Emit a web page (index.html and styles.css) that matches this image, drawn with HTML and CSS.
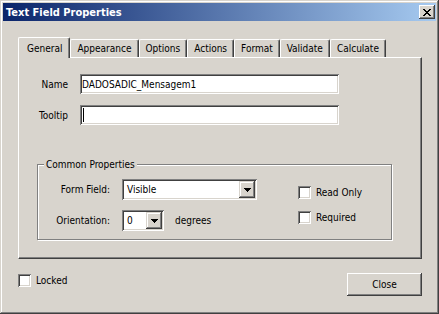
FILE: index.html
```html
<!DOCTYPE html>
<html>
<head>
<meta charset="utf-8">
<title>Text Field Properties</title>
<link rel="stylesheet" href="styles.css">
</head>
<body>
<div class="window">
  <div class="titlebar">
    <span class="title">Text Field Properties</span>
    <span class="close-btn"><svg width="8" height="7" viewBox="0 0 8 7" shape-rendering="crispEdges"><path d="M0 0h2v1H0zM6 0h2v1H6zM1 1h2v1H1zM5 1h2v1H5zM2 2h4v1H2zM3 3h2v1H3zM2 4h4v1H2zM1 5h2v1H1zM5 5h2v1H5zM0 6h2v1H0zM6 6h2v1H6z" fill="#000"/></svg></span>
  </div>
  <div class="body">
    <div class="tabs">
      <div class="tab active">General</div>
      <div class="tab">Appearance</div>
      <div class="tab">Options</div>
      <div class="tab">Actions</div>
      <div class="tab">Format</div>
      <div class="tab">Validate</div>
      <div class="tab">Calculate</div>
    </div>
    <div class="panel">
      <div class="field">
        <span class="field-label">Name</span>
        <div class="input">DADOSADIC_Mensagem1</div>
      </div>
      <div class="field">
        <span class="field-label">Tooltip</span>
        <div class="input"><span class="caret"></span></div>
      </div>
      <div class="group">
        <div class="group-title">Common Properties</div>
        <div class="group-body">
          <div class="g-left">
            <div class="g-row">
              <span class="g-label">Form Field:</span>
              <div class="g-ctl">
                <div class="select wide"><span class="sel-text">Visible</span><span class="drop"><svg width="7" height="4" viewBox="0 0 7 4" shape-rendering="crispEdges"><path d="M0 0h7v1H0zM1 1h5v1H1zM2 2h3v1H2zM3 3h1v1H3z" fill="#000"/></svg></span></div>
              </div>
            </div>
            <div class="g-row">
              <span class="g-label">Orientation:</span>
              <div class="g-ctl">
                <div class="select narrow"><span class="sel-text">0</span><span class="drop"><svg width="7" height="4" viewBox="0 0 7 4" shape-rendering="crispEdges"><path d="M0 0h7v1H0zM1 1h5v1H1zM2 2h3v1H2zM3 3h1v1H3z" fill="#000"/></svg></span></div>
                <span class="degrees">degrees</span>
              </div>
            </div>
          </div>
          <div class="g-right">
            <div class="check"><span class="box"></span><span>Read Only</span></div>
            <div class="check"><span class="box"></span><span>Required</span></div>
          </div>
        </div>
      </div>
    </div>
    <div class="footer">
      <div class="check locked"><span class="box"></span><span>Locked</span></div>
      <button class="btn" type="button">Close</button>
    </div>
  </div>
</div>
</body>
</html>
```
FILE: styles.css
```css
* { box-sizing: border-box; }
html, body { margin: 0; padding: 0; }
body {
  width: 439px;
  height: 314px;
  overflow: hidden;
  font-family: "DejaVu Sans Condensed", "Liberation Sans", sans-serif;
  font-size: 10px;
  color: #000;
  background: #d8d4cd;
}
.window {
  width: 439px;
  height: 314px;
  padding: 3px;
  background: #d8d4cd;
  box-shadow: inset -1px -1px #404040, inset 1px 1px #d8d4cd, inset -2px -2px #808080, inset 2px 2px #fff;
  display: flex;
  flex-direction: column;
}
.titlebar {
  height: 18px;
  flex: none;
  display: flex;
  align-items: center;
  justify-content: space-between;
  background: linear-gradient(to right, #0a246a, #a6caf0);
  padding: 0 1px 0 3px;
}
.title {
  color: #fff;
  font-weight: bold;
  font-size: 11px;
}
.close-btn {
  width: 16px;
  height: 14px;
  background: #d8d4cd;
  box-shadow: inset -1px -1px #404040, inset 1px 1px #fff, inset -2px -2px #808080, inset 2px 2px #d8d4cd;
  display: flex;
  align-items: center;
  justify-content: center;
}
.close-btn svg { display: block; }
.body {
  padding: 0 14px 0 15px;
}
.tabs {
  display: flex;
  align-items: flex-end;
  height: 20px;
  margin-top: 16px;
}
.tab {
  height: 18px;
  padding: 0 6px;
  display: flex;
  align-items: center;
  justify-content: center;
  border-top: 1px solid #fff;
  border-left: 1px solid #fff;
  border-right: 1px solid #404040;
  box-shadow: inset -1px 0 #808080;
  border-radius: 2px 2px 0 0;
  background: #d8d4cd;
  white-space: nowrap;
}
.tab.active {
  height: 21px;
  margin-bottom: -1px;
  padding: 0 7px 0 8px;
  position: relative;
  z-index: 1;
}
.panel {
  height: 202px;
  border: 1px solid;
  border-color: #fff #404040 #404040 #fff;
  box-shadow: inset -1px -1px #808080;
  padding-top: 16px;
}
.field {
  display: flex;
  align-items: center;
  gap: 12px;
  height: 20px;
}
.field + .field { margin-top: 11px; }
.field-label {
  width: 49px;
  text-align: right;
}
.input {
  width: 259px;
  height: 20px;
  background: #fff;
  box-shadow: inset 1px 1px #808080, inset -1px -1px #fff, inset 2px 2px #404040, inset -2px -2px #d8d4cd;
  padding-left: 2px;
  display: flex;
  align-items: center;
}
.caret {
  display: block;
  width: 1px;
  height: 14px;
  background: #000;
  margin-left: 1px;
}
.group {
  margin: 39px 0 0 18px;
  width: 355px;
  height: 76px;
  border: 1px solid #808080;
  box-shadow: inset 1px 1px #fff, 1px 1px #fff;
}
.group-title {
  width: fit-content;
  margin: -7px 0 0 6px;
  padding: 0 2px;
  background: #d8d4cd;
  line-height: 13px;
}
.group-body {
  display: flex;
  margin-top: 8px;
}
.g-left { width: 260px; }
.g-row {
  display: flex;
  align-items: center;
  height: 21px;
}
.g-row + .g-row { margin-top: 10px; }
.g-label {
  width: 72px;
  text-align: right;
  margin-right: 12px;
}
.g-ctl {
  width: 176px;
  display: flex;
  align-items: center;
}
.select {
  height: 21px;
  background: #fff;
  box-shadow: inset 1px 1px #808080, inset -1px -1px #fff, inset 2px 2px #404040, inset -2px -2px #d8d4cd;
  display: flex;
  align-items: center;
  justify-content: space-between;
  padding: 2px;
}
.select.wide { width: 135px; }
.select.narrow { width: 42px; }
.sel-text { padding-left: 3px; }
.drop {
  width: 16px;
  height: 17px;
  background: #d8d4cd;
  box-shadow: inset -1px -1px #404040, inset 1px 1px #d8d4cd, inset -2px -2px #808080, inset 2px 2px #fff;
  display: flex;
  align-items: center;
  justify-content: center;
}
.drop svg { display: block; }
.degrees { margin-left: 11px; }
.g-right {
  display: flex;
  flex-direction: column;
  padding-top: 7px;
}
.check {
  display: flex;
  align-items: center;
  gap: 5px;
}
.g-right .check + .check { margin-top: 12px; }
.box {
  display: block;
  width: 13px;
  height: 13px;
  background: #fff;
  box-shadow: inset 1px 1px #808080, inset -1px -1px #fff, inset 2px 2px #404040, inset -2px -2px #d8d4cd;
}
.footer {
  display: flex;
  justify-content: space-between;
  align-items: flex-start;
  margin-top: 14px;
}
.locked { margin-top: 1px; }
.btn {
  width: 75px;
  height: 23px;
  border: 0;
  padding: 0;
  font: inherit;
  color: #000;
  background: #d8d4cd;
  box-shadow: inset -1px -1px #404040, inset 1px 1px #fff, inset -2px -2px #808080, inset 2px 2px #d8d4cd;
}
```
